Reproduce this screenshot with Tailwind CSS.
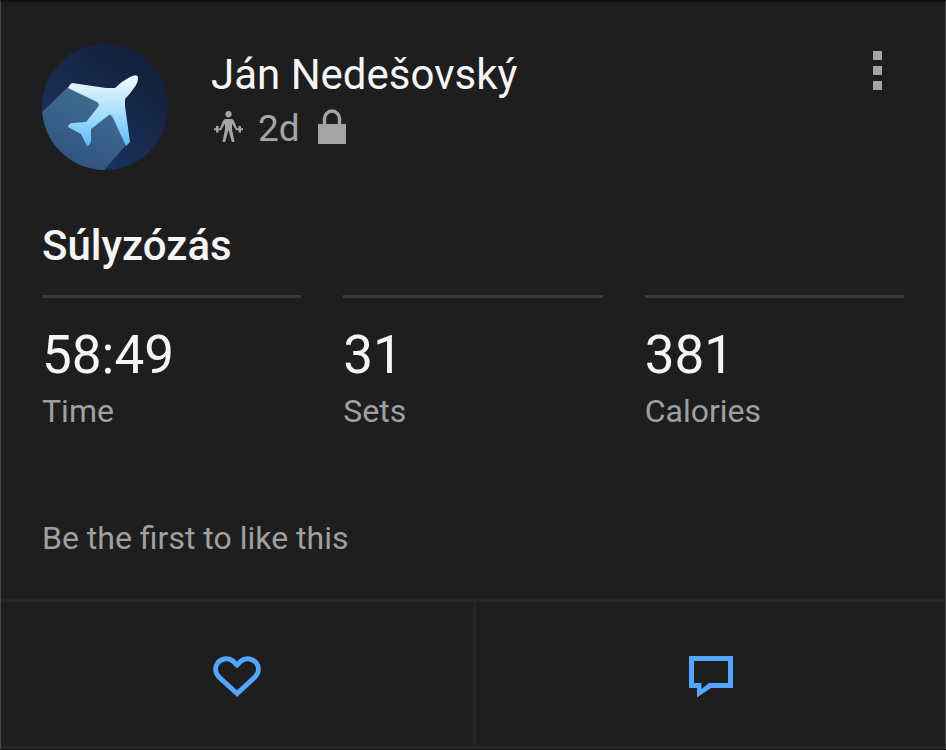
<!DOCTYPE html>
<html lang="en">
<head>
  <meta charset="UTF-8" />
  <meta name="viewport" content="width=device-width, initial-scale=1" />
  <title>Activity</title>
  <script src="https://cdn.jsdelivr.net/npm/@tailwindcss/browser@4"></script>
</head>
<body class="min-h-screen bg-[#101010] font-['Roboto',sans-serif] text-[#f5f5f5]">
  <article class="border-x border-[#484848] border-t-2 border-t-[#101010] bg-[#1e1e1e]">

    <div class="px-[41px] pt-[42px] pb-[43px]">
      <!-- User -->
      <header class="flex items-start">
        <svg class="size-[126px] shrink-0" viewBox="0 0 126 126" role="img" aria-label="Profile picture">
          <defs>
            <linearGradient id="sky" x1="0.8" y1="0.1" x2="0.2" y2="0.9">
              <stop offset="0" stop-color="#12203a" />
              <stop offset="1" stop-color="#1c3360" />
            </linearGradient>
            <linearGradient id="plane" x1="0" y1="0" x2="0" y2="1">
              <stop offset="0" stop-color="#f1faff" />
              <stop offset="0.5" stop-color="#aee1fb" />
              <stop offset="1" stop-color="#5dbdfb" />
            </linearGradient>
            <linearGradient id="shadow" x1="0.7" y1="0.1" x2="0.3" y2="1">
              <stop offset="0" stop-color="#3e6d92" />
              <stop offset="1" stop-color="#2f4f7c" />
            </linearGradient>
            <clipPath id="round"><circle cx="63" cy="63" r="63" /></clipPath>
          </defs>
          <g clip-path="url(#round)">
            <rect width="126" height="126" fill="url(#sky)" />
            <path d="M26 43 L-6 74 V132 H57 L84 101 L74 50 Z" fill="url(#shadow)" />
            <path d="M30 39 L64 44 L73 44 Q80 37 88 33 Q96 29 96 34 Q96 39 92 44 Q88 50 83 55 L83 62 L88 98 L84 102 L71 74 Q69 70 67 71 L49 85 L49 97 Q48 102 45 102 L39 90 L26 83 Q26 80 30 79 L44 78 L56 63 Q58 60 55 58 L26 44 Q27 41 30 39 Z" fill="url(#plane)" />
          </g>
        </svg>
        <div class="ml-[43px] mt-[7px] min-w-0 flex-1">
          <h1 class="text-[42px] leading-[48px]">Ján Nedešovský</h1>
          <div class="mt-2 flex items-start text-[#a5a5a5]">
            <svg class="mt-1 ml-[3px] h-8 w-[30px]" viewBox="0 0 30 32" fill="currentColor" aria-hidden="true">
              <circle cx="14.5" cy="3.2" r="3.1" />
              <path d="M11.500 8 H17.500 Q19 8 20 10 L23 17.200 H24.500 V15 H27 V17.200 H29 V19.200 H27 V21.500 H24.500 V19.200 H22 L18 12.500 V18 L20.500 31 H17.800 L14.500 19 L11.200 31 H8.500 L11 18 V12.500 L7 19.200 H4.500 V21.500 H2 V19.200 H0 V17.200 H2 V15 H4.500 V17.200 H6 L9 10 Q10 8 11.500 8 Z" />
            </svg>
            <span class="ml-3.5 text-[37px] leading-[44px]">2d</span>
            <svg class="mt-0.5 ml-[18px] h-[36px] w-[28px]" viewBox="0 0 28 36" role="img" aria-label="Private">
              <path d="M6.500 17 V10 A7.500 8 0 0 1 21.500 10 V17" fill="none" stroke="#a5a5a5" stroke-width="3.500" />
              <rect y="15" width="28" height="20" fill="#a5a5a5" />
            </svg>
          </div>
        </div>
        <button type="button" aria-label="More options" class="mt-[7px] mr-[22px] flex flex-col gap-1.5">
          <span class="size-[9px] bg-[#a5a5a5]"></span>
          <span class="size-[9px] bg-[#a5a5a5]"></span>
          <span class="size-[9px] bg-[#a5a5a5]"></span>
        </button>
      </header>

      <!-- Workout -->
      <h2 class="mt-[52px] text-[42px] leading-[48px] font-medium">Súlyzózás</h2>
      <dl class="mt-[25px] grid grid-cols-3 gap-[42px]">
        <div class="flex flex-col-reverse border-t-3 border-[#3a3a3a] pt-[27px]">
          <dt class="mt-2 text-[32px] leading-9 text-[#a0a0a0]">Time</dt>
          <dd class="text-[53px] leading-[60px]">58:49</dd>
        </div>
        <div class="flex flex-col-reverse border-t-3 border-[#3a3a3a] pt-[27px]">
          <dt class="mt-2 text-[32px] leading-9 text-[#a0a0a0]">Sets</dt>
          <dd class="text-[53px] leading-[60px]">31</dd>
        </div>
        <div class="flex flex-col-reverse border-t-3 border-[#3a3a3a] pt-[27px]">
          <dt class="mt-2 text-[32px] leading-9 text-[#a0a0a0]">Calories</dt>
          <dd class="text-[53px] leading-[60px]">381</dd>
        </div>
      </dl>
      <p class="mt-[91px] text-[32px] leading-9 text-[#a0a0a0]">Be the first to like this</p>
    </div>

    <!-- Actions -->
    <div class="grid grid-cols-2 border-y-3 border-[#262626]">
      <button type="button" aria-label="Like" class="flex h-36 items-center justify-center pt-1.5 text-[#53a6fb]">
        <svg class="h-[42px] w-12" viewBox="0 0 48 42" fill="none" stroke="currentColor" stroke-width="5" aria-hidden="true">
          <path d="M24 37.500 L6.500 21.500 C2 17 1.500 11 5 6.500 C9 1.800 16 1.500 20 5 L24 9 L28 5 C32 1.500 39 1.800 43 6.500 C46.500 11 46 17 41.500 21.500 Z" />
        </svg>
      </button>
      <button type="button" aria-label="Comment" class="flex h-36 items-center justify-center border-l-3 border-[#262626] pt-1.5 text-[#53a6fb]">
        <svg class="h-[42px] w-11" viewBox="0 0 44 42" fill="currentColor" fill-rule="evenodd" aria-hidden="true">
          <path d="M0 0 H44 V32 H22 L8 41.500 V32 H0 Z M5 5 V27 H12.500 V33 L20 27 H39 V5 Z" />
        </svg>
      </button>
    </div>
  </article>
</body>
</html>
